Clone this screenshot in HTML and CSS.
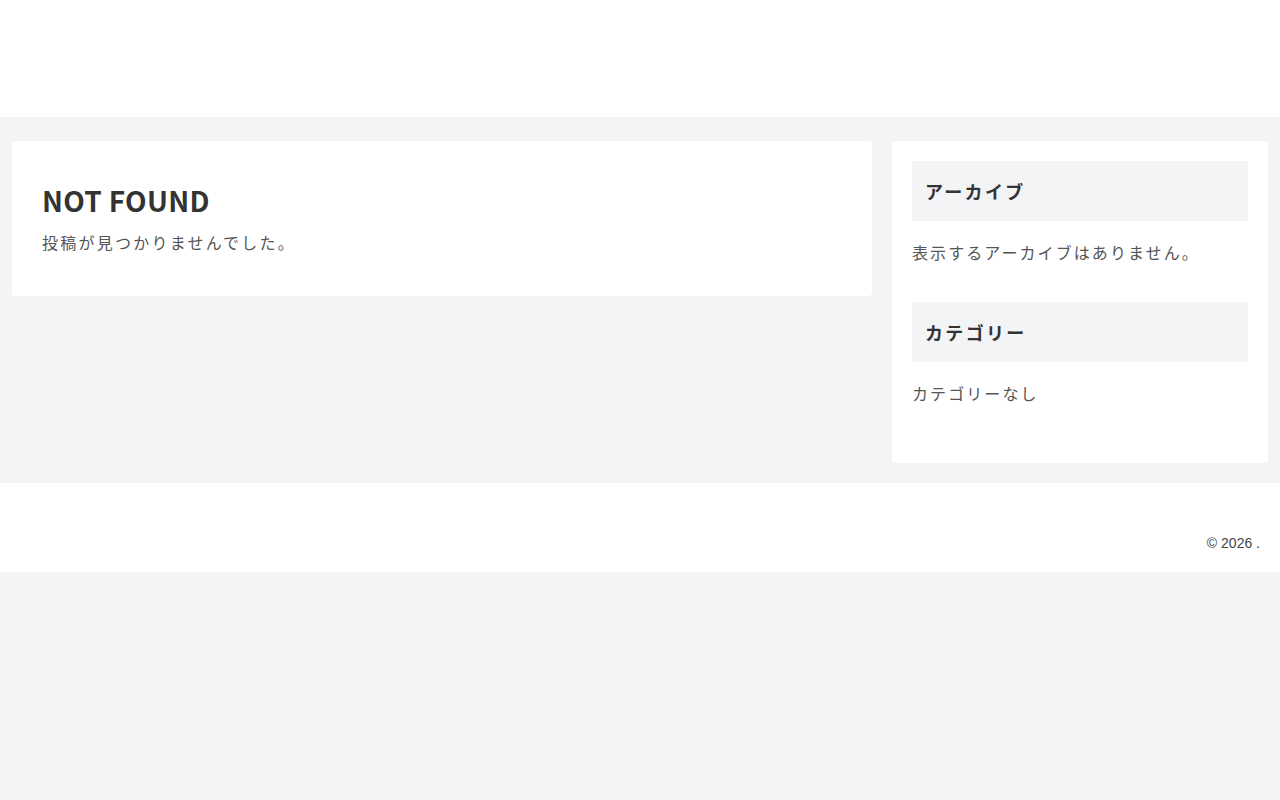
FILE: index.html
```html
<!DOCTYPE html>
<html lang="ja">
<head>
    <meta charset="UTF-8">
    <meta name="viewport" content="width=device-width, initial-scale=1.0">
    <title>Not Found</title>
    <link rel="stylesheet" href="styles.css">
</head>
<body>
    <header class="site-header"></header>

    <div class="content-wrap">
        <!-- メインコンテンツ -->
        <main class="main-area">
            <article class="card">
                <h1 class="page-title">NOT FOUND</h1>
                <p class="page-text">投稿が見つかりませんでした。</p>
            </article>
        </main>

        <!-- サイドバー -->
        <aside class="sidebar">
            <section class="widget">
                <h2 class="widget-title">アーカイブ</h2>
                <p class="widget-text">表示するアーカイブはありません。</p>
            </section>
            <section class="widget">
                <h2 class="widget-title">カテゴリー</h2>
                <p class="widget-text">カテゴリーなし</p>
            </section>
        </aside>
    </div>

    <footer class="site-footer">
        <p class="copyright">© 2026 .</p>
    </footer>
</body>
</html>
```

FILE: styles.css
```css
body {
    margin: 0;
    padding: 0;
    background-color: #f3f4f6;
    color: #333;
    font-family: "Noto Sans CJK JP", "Noto Sans", sans-serif;
}

.site-header {
    height: 117px;
    background-color: #fff;
}

/* 2カラム */
.content-wrap {
    display: flex;
    gap: 20px;
    padding: 24px 12px 20px;
    align-items: flex-start;
}

.main-area {
    flex: 1;
}

.card {
    background-color: #fff;
    border-radius: 4px;
    padding: 40px 30px 41px;
}

.page-title {
    margin: 0 0 10px;
    font-size: 28px;
    line-height: 38px;
    font-weight: bold;
    letter-spacing: 0.3px;
    color: #333;
}

.page-text {
    margin: 0;
    font-size: 16px;
    line-height: 26px;
    letter-spacing: 0.14em;
    color: #555;
}

/* サイドバー */
.sidebar {
    width: 336px;
    background-color: #fff;
    border-radius: 4px;
    padding: 20px;
}

.widget {
    margin-bottom: 35px;
}

.widget-title {
    margin: 0;
    background-color: #f3f4f6;
    border-radius: 2px;
    padding: 0 13px;
    font-size: 18px;
    line-height: 60px;
    font-weight: bold;
    letter-spacing: 0.13em;
    color: #333;
}

.widget-text {
    margin: 16px 0 0;
    font-size: 16px;
    line-height: 30px;
    letter-spacing: 0.13em;
    color: #555;
}

/* フッター */
.site-footer {
    background-color: #fff;
    padding: 50px 20px 19px;
    text-align: right;
}

.copyright {
    margin: 0;
    font-family: "Liberation Sans", Arial, sans-serif;
    font-size: 14px;
    line-height: 20px;
    color: #444;
}
```
